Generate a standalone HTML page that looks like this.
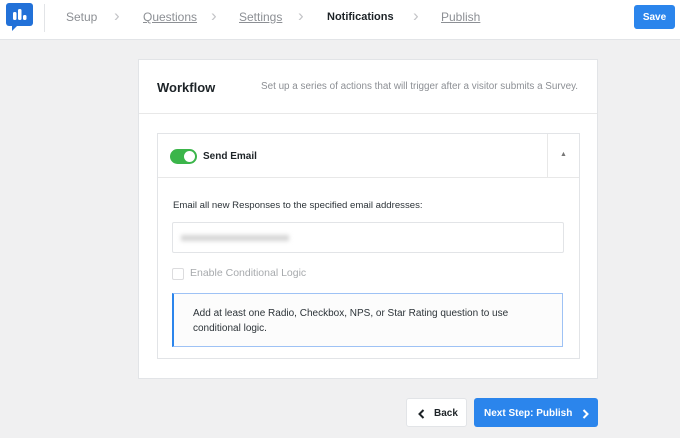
<!DOCTYPE html>
<html><head><style>
*{box-sizing:border-box;margin:0;padding:0}
body{width:680px;height:438px;background:#f0f0f1;font-family:"Liberation Sans",sans-serif;position:relative;overflow:hidden;color:#2c3338}
.hdr{position:absolute;left:0;top:0;width:680px;height:40px;background:#fff;border-bottom:1px solid #e2e4e7}
.abs{position:absolute}
.step{position:absolute;top:10px;font-size:12px;color:#8c8f94}
.u{text-decoration:underline}
.chev{position:absolute;top:6px;color:#c3c4c7;font-size:17px}
.card{position:absolute;left:138px;top:59px;width:460px;height:320px;background:#fff;border:1px solid #e2e4e7}
</style></head><body>
<div class="hdr">
 <svg class="abs" style="left:6px;top:3px" width="27" height="28" viewBox="0 0 27 28"><rect x="0" y="0" width="27" height="23" rx="3" fill="#2271d8"/><path d="M6 22 L6 28 L12 22Z" fill="#2271d8"/><rect x="7" y="9" width="3.5" height="8" rx="1.5" fill="#fff"/><rect x="12" y="6" width="3.5" height="11" rx="1.5" fill="#fff"/><rect x="17" y="12" width="3.5" height="5" rx="1.5" fill="#fff"/></svg>
 <div class="abs" style="left:44px;top:4px;width:1px;height:28px;background:#e2e4e7"></div>
 <div class="step" style="left:66px">Setup</div>
 <div class="chev" style="left:114px">›</div>
 <div class="step u" style="left:143px">Questions</div>
 <div class="chev" style="left:211px">›</div>
 <div class="step u" style="left:239px">Settings</div>
 <div class="chev" style="left:298px">›</div>
 <div class="step" style="left:327px;color:#1d2327;font-weight:bold;font-size:11px;top:11px">Notifications</div>
 <div class="chev" style="left:413px">›</div>
 <div class="step u" style="left:441px">Publish</div>
 <div class="abs" style="left:634px;top:5px;width:41px;height:24px;background:#2b85ec;border-radius:3px;color:#fff;font-size:10px;font-weight:bold;display:flex;align-items:center;justify-content:center">Save</div>
</div>
<div class="card">
 <div class="abs" style="left:0;top:0;width:458px;height:54px;border-bottom:1px solid #e8e8e8"></div>
 <div class="abs" style="left:18px;top:20px;font-size:13px;font-weight:bold;color:#1d2327">Workflow</div>
 <div class="abs" style="left:122px;top:21px;font-size:9.9px;color:#8c8f94;white-space:nowrap">Set up a series of actions that will trigger after a visitor submits a Survey.</div>
 <div class="abs" style="left:18px;top:73px;width:423px;height:226px;border:1px solid #e2e4e7">
  <div class="abs" style="left:0;top:0;width:421px;height:44px;border-bottom:1px solid #e8e8e8"></div>
  <div class="abs" style="left:389px;top:0;width:1px;height:44px;background:#e8e8e8"></div>
  <div class="abs" style="left:402px;top:17px;font-size:7px;color:#777">▲</div>
  <div class="abs" style="left:12px;top:15px;width:27px;height:15px;border-radius:8px;background:#3bb54a"><div class="abs" style="left:14px;top:2px;width:11px;height:11px;border-radius:50%;background:#fff"></div></div>
  <div class="abs" style="left:45px;top:17px;font-size:10px;font-weight:bold;color:#1d2327">Send Email</div>
  <div class="abs" style="left:15px;top:66px;font-size:9.6px;color:#2c3338">Email all new Responses to the specified email addresses:</div>
  <div class="abs" style="left:14px;top:88px;width:392px;height:31px;border:1px solid #e2e4e7;border-radius:2px"><div class="abs" style="left:8px;top:12px;width:108px;height:6px;background:#d4d4d4;filter:blur(2px)"></div></div>
  <div class="abs" style="left:14px;top:134px;width:12px;height:12px;border:1px solid #dcdcde;border-radius:2px"></div>
  <div class="abs" style="left:32px;top:133px;font-size:10.5px;color:#a7aaad">Enable Conditional Logic</div>
  <div class="abs" style="left:14px;top:159px;width:391px;height:54px;border:1px solid #9ec2f5;border-left:2px solid #2b85ec;background:#fcfcfc;padding:12px 50px 0 19px;font-size:10px;line-height:15px;color:#2c3338">Add at least one Radio, Checkbox, NPS, or Star Rating question to use conditional logic.</div>
 </div>
</div>
<div class="abs" style="left:406px;top:398px;width:61px;height:29px;background:#fff;border:1px solid #e2e4e7;border-radius:3px;font-size:10px;font-weight:bold;color:#1d2327;display:flex;align-items:center;padding-left:11px;padding-top:2px"><svg width="7" height="10" viewBox="0 0 7 10" style="margin-right:9px"><path d="M5.5 1 L1.5 5 L5.5 9" stroke="#1d2327" stroke-width="2" fill="none"/></svg>Back</div>
<div class="abs" style="left:474px;top:398px;width:124px;height:29px;background:#2b85ec;border-radius:3px;font-size:10px;font-weight:bold;color:#fff;display:flex;align-items:center;padding-left:10px;padding-top:2px">Next Step: Publish<svg width="7" height="10" viewBox="0 0 7 10" style="margin-left:10px"><path d="M1.5 1 L5.5 5 L1.5 9" stroke="#fff" stroke-width="2" fill="none"/></svg></div>
</body></html>
